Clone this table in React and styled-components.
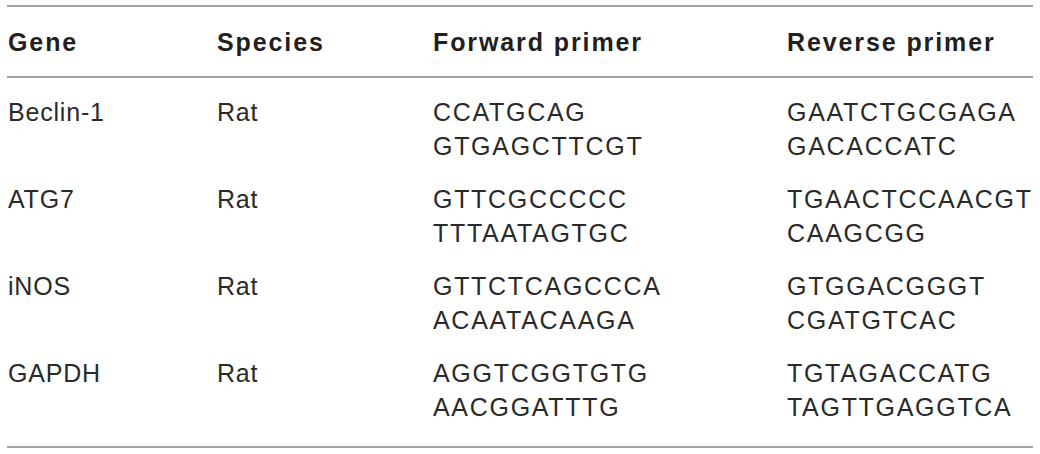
import styled, { createGlobalStyle } from "styled-components"

const GlobalStyle = createGlobalStyle`
    body {
        margin: 0;
        background: #ffffff;
        font-family: "Liberation Sans", Arial, sans-serif;
        color: #231f20;
    }
`

const Table = styled.div`
    width: 1026px;
    margin: 5px 0 0 7px;
    border-top: 2px solid #a3a3a3;
    border-bottom: 2px solid #a3a3a3;
`

const Row = styled.div`
    display: grid;
    grid-template-columns: 209px 216px 354px 1fr;
    padding: ${p => p.$head ? "0" : "17px 0 2px"};
    height: ${p => p.$head ? "69px" : "auto"};
    align-items: ${p => p.$head ? "center" : "start"};
    border-bottom: ${p => p.$head ? "2px solid #a3a3a3" : "none"};
`

const Body = styled.div`
    padding-bottom: 20px;
`

const HeadCell = styled.div`
    font-size: 25px;
    font-weight: bold;
    letter-spacing: 1.9px;
    line-height: 34px;
    padding-left: 1px;
    color: #231f20;
`

const Cell = styled.div`
    font-size: 25px;
    letter-spacing: ${p => p.$seq ? "1.7px" : "0.8px"};
    line-height: 34px;
    padding-left: 1px;
    color: #2a2a2a;
`

const rows = [
    { gene: "Beclin-1", species: "Rat", fwd: ["CCATGCAG", "GTGAGCTTCGT"], rev: ["GAATCTGCGAGA", "GACACCATC"] },
    { gene: "ATG7", species: "Rat", fwd: ["GTTCGCCCCC", "TTTAATAGTGC"], rev: ["TGAACTCCAACGT", "CAAGCGG"] },
    { gene: "iNOS", species: "Rat", fwd: ["GTTCTCAGCCCA", "ACAATACAAGA"], rev: ["GTGGACGGGT", "CGATGTCAC"] },
    { gene: "GAPDH", species: "Rat", fwd: ["AGGTCGGTGTG", "AACGGATTTG"], rev: ["TGTAGACCATG", "TAGTTGAGGTCA"] },
]

function Sequence({ lines }) {
    return (
        <Cell $seq>
            {lines.map((l, i) => <div key={i}>{l}</div>)}
        </Cell>
    )
}

export default function App() {
    return (
        <>
            <GlobalStyle />
            <Table>
                <Row $head>
                    <HeadCell>Gene</HeadCell>
                    <HeadCell>Species</HeadCell>
                    <HeadCell>Forward primer</HeadCell>
                    <HeadCell>Reverse primer</HeadCell>
                </Row>
                <Body>
                    {rows.map(r => (
                        <Row key={r.gene}>
                            <Cell>{r.gene}</Cell>
                            <Cell>{r.species}</Cell>
                            <Sequence lines={r.fwd} />
                            <Sequence lines={r.rev} />
                        </Row>
                    ))}
                </Body>
            </Table>
        </>
    )
}
